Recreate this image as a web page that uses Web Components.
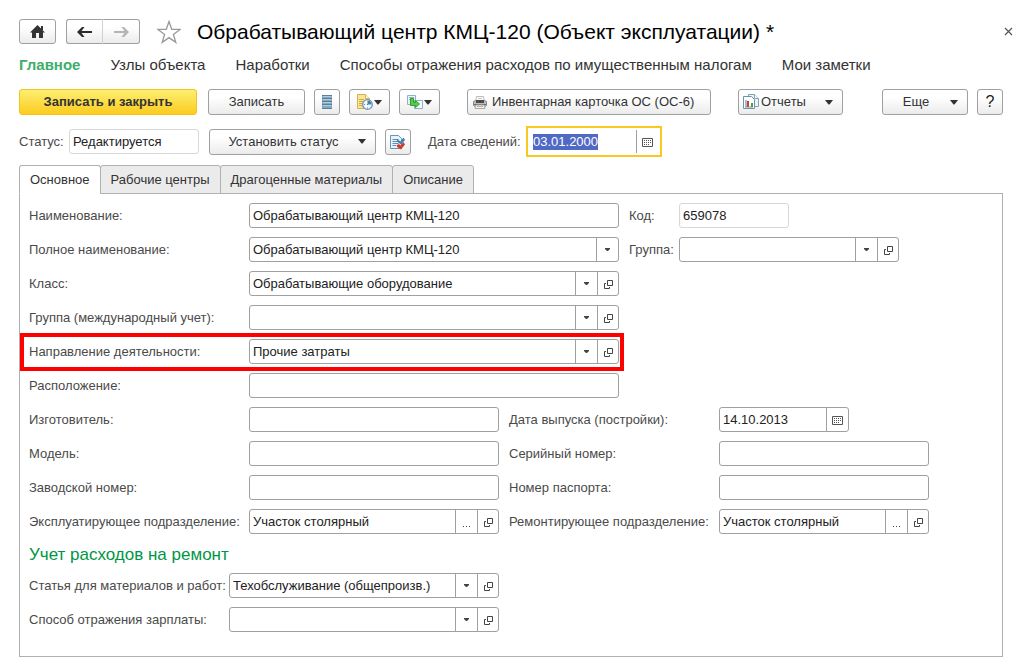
<!DOCTYPE html>
<html lang="ru">
<head>
<meta charset="utf-8">
<meta name="viewport" content="width=device-width, initial-scale=1">
<title>Обрабатывающий центр КМЦ-120 (Объект эксплуатации)</title>
<style>
  body { margin: 0; background: #fff; color: #333; font: 13px/16px "Liberation Sans", Arial, sans-serif; }
</style>
</head>
<body>
<object-card></object-card>

<template id="card-template">
  <style>
    :host { display: block; padding: 19px 26px 14px 19px; }
    header { display: flex; align-items: center; height: 25px; margin-right: -10px; }
    h1 { flex: 1; margin: 0 0 0 16px; font-size: 21px; line-height: 24px; font-weight: 400; color: #000; white-space: nowrap; }
    .home { --w: 37px; --h: 25px; }
    .pair { display: flex; margin-left: 10px; --w: 37px; --h: 25px; }
    .star, .close { display: flex; padding: 0; border: 0; background: none; }
    .star { margin-left: 17px; }
    nav { display: flex; gap: 30px; margin-top: 12px; font-size: 15px; line-height: 18px; white-space: nowrap; }
    nav a { color: #333; text-decoration: none; }
    nav a.on { color: #3dae6c; font-weight: 700; }
    .bar { display: flex; align-items: center; gap: 9px; margin-top: 15px; }
    .status { display: flex; align-items: center; height: 31px; margin-top: 11px; }
    .w26 { --w: 26px; }
    .w41 { --w: 41px; }
    .save { --w: 178px; margin-right: 2px; }
    .write { --w: 97px; }
    .print { --w: 244px; margin: 0 18px; }
    .reports { --w: 105px; }
    .more { --w: 86px; margin-left: auto; }
    .state { --label: 50px; --field: 130px; margin-right: 10px; }
    .set { --w: 167px; margin-right: 9px; }
    .when { --label: 98px; --field: 136px; margin-left: 17px; }
    card-tabs { margin-top: 8px; }
    .form { display: flex; flex-direction: column; gap: 9px; padding: 9px 9px 24px; }
    .row { display: flex; gap: 10px; position: relative; }
    .row > * { --label: 220px; --field: 370px; }
    .row > .side { --label: 50px; --field: 220px; }
    .row > .code { --field: 110px; }
    .row.half > * { --field: 250px; }
    .row.half > .second { --label: 210px; --field: 210px; }
    .row.half > .date { --field: 130px; }
    .row.cost > * { --label: 200px; --field: 270px; }
    .mark { align-self: flex-start; }
    .mark::after { content: ""; position: absolute; inset: -6px -5px -7px -9px; border: 4px solid #f00; pointer-events: none; }
    h2 { margin: 3px 0 0; font-size: 17px; line-height: 18px; font-weight: 400; color: #009646; }
  </style>
  <header>
    <card-button class="home" icon="home" hint="Домой"></card-button>
    <div class="pair">
      <card-button icon="back" hint="Назад" join="left"></card-button>
      <card-button icon="forward" hint="Вперед" join="right"></card-button>
    </div>
    <button class="star" aria-label="В избранное"><card-icon name="star"></card-icon></button>
    <h1>Обрабатывающий центр КМЦ-120 (Объект эксплуатации) *</h1>
    <button class="close" aria-label="Закрыть"><card-icon name="close"></card-icon></button>
  </header>
  <nav>
    <a class="on" href="#main">Главное</a>
    <a href="#nodes">Узлы объекта</a>
    <a href="#hours">Наработки</a>
    <a href="#taxes">Способы отражения расходов по имущественным налогам</a>
    <a href="#notes">Мои заметки</a>
  </nav>
  <div class="bar">
    <card-button class="save" primary>Записать и закрыть</card-button>
    <card-button class="write">Записать</card-button>
    <card-button class="w26" icon="list" hint="Список"></card-button>
    <card-button class="w41" icon="task" hint="Напоминание" caret tight></card-button>
    <card-button class="w41" icon="based" hint="Создать на основании" caret tight></card-button>
    <card-button class="print" icon="printer" start>Инвентарная карточка ОС (ОС-6)</card-button>
    <card-button class="reports" icon="report" caret start tight>Отчеты</card-button>
    <card-button class="more" caret>Еще</card-button>
    <card-button class="w26" hint="Справка" big>?</card-button>
  </div>
  <div class="status">
    <card-field class="state" label="Статус:" value="Редактируется" readonly></card-field>
    <card-button class="set" caret>Установить статус</card-button>
    <card-button class="w26" icon="check" hint="Проверить"></card-button>
    <card-field class="when" label="Дата сведений:" value="03.01.2000" tools="calendar" active></card-field>
  </div>
  <card-tabs tabs="Основное|Рабочие центры|Драгоценные материалы|Описание">
    <div class="form">
      <div class="row">
        <card-field label="Наименование:" value="Обрабатывающий центр КМЦ-120"></card-field>
        <card-field class="side code" label="Код:" value="659078" readonly></card-field>
      </div>
      <div class="row">
        <card-field label="Полное наименование:" value="Обрабатывающий центр КМЦ-120" tools="drop"></card-field>
        <card-field class="side" label="Группа:" tools="drop open"></card-field>
      </div>
      <div class="row"><card-field label="Класс:" value="Обрабатывающие оборудование" tools="drop open"></card-field></div>
      <div class="row"><card-field label="Группа (международный учет):" tools="drop open"></card-field></div>
      <div class="row mark"><card-field label="Направление деятельности:" value="Прочие затраты" tools="drop open"></card-field></div>
      <div class="row"><card-field label="Расположение:"></card-field></div>
      <div class="row half">
        <card-field label="Изготовитель:"></card-field>
        <card-field class="second date" label="Дата выпуска (постройки):" value="14.10.2013" tools="calendar"></card-field>
      </div>
      <div class="row half">
        <card-field label="Модель:"></card-field>
        <card-field class="second" label="Серийный номер:"></card-field>
      </div>
      <div class="row half">
        <card-field label="Заводской номер:"></card-field>
        <card-field class="second" label="Номер паспорта:"></card-field>
      </div>
      <div class="row half">
        <card-field label="Эксплуатирующее подразделение:" value="Участок столярный" tools="dots open"></card-field>
        <card-field class="second" label="Ремонтирующее подразделение:" value="Участок столярный" tools="dots open"></card-field>
      </div>
      <h2>Учет расходов на ремонт</h2>
      <div class="row cost"><card-field label="Статья для материалов и работ:" value="Техобслуживание (общепроизв.)" tools="drop open"></card-field></div>
      <div class="row cost"><card-field label="Способ отражения зарплаты:" tools="drop open"></card-field></div>
    </div>
  </card-tabs>
</template>

<script>
const ICONS = {
  home: [15, 13, '<path d="M7.5 0 15 7.500h-2V13H9V8H6v5H2V7.500H0Z" fill="#333"/><path d="M11 1h2v4h-2z" fill="#333"/>'],
  back: [15, 12, '<path d="M0 6 5 1h2.500L4.500 5H15v2H4.500l3 4H5Z" fill="#2b2b2b"/>'],
  forward: [15, 12, '<path d="M15 6l-5-5H7.500l3 4H0v2h10.500l-3 4H10Z" fill="#b4b4b4"/>'],
  star: [24, 24, '<path d="M12 1.5 14.7 9.3 23 9.4 16.4 14.4 18.8 22.3 12 17.6 5.2 22.3 7.6 14.4 1 9.4 9.3 9.3Z" fill="#fff" stroke="#999" stroke-width="1.3"/>'],
  close: [9, 9, '<path d="m1 1 7 7M8 1 1 8" stroke="#555" stroke-width="1.2"/>'],
  caret: [9, 5, '<path d="M1 0h8L5.500 4.500h-1Z" fill="#333"/>'],
  drop: [5, 3, '<path d="M0 0h5v1L3 3H2L0 1Z" fill="#444"/>'],
  open: [9, 9, '<path d="M3.5.5h5v5h-5zM2 3.5H.5v5h5V7" fill="none" stroke="#444"/>'],
  dots: [8, 2, '<path d="M0 1h1v1H0zM3 1h1v1H3zM6 1h1v1H6z" fill="#444"/>'],
  calendar: [11, 9, '<path d="M.5.5h10v8H.5z" fill="#fff" stroke="#555"/><path d="M2 2.5h7M2 4.5h7M2 6.5h5" stroke="#555" stroke-dasharray="1 1"/>'],
  list: [10, 14, '<path d="M0 0h10v14H0z" fill="#86a9c1"/><path d="M0 .5h10M0 3.500h10M0 6.500h10M0 9.500h10M0 13.500h10" stroke="#56809c"/><path d="M1 1.500h8M1 4.500h8M1 7.500h8M1 10.500h8" stroke="#b3ccdc"/>'],
  task: [16, 16, '<path d="M.5.5h8l4 4v10H.5z" fill="#fbe596" stroke="#d3b054"/><path d="M8.500.5v4h4" fill="#fff8dc" stroke="#d3b054"/><path d="M2 5.500h5M2 7.500h6M2 9.500h4M2 11.500h3" stroke="#d0a84a"/><circle cx="10.500" cy="10.500" r="4.800" fill="#f3f9fd" stroke="#6b97ba" stroke-width="1.300"/><path d="M10.500 10.500V6.500a4 4 0 0 1 4 4Z" fill="#4383b4"/><path d="M10.500 13.500v1M7 10.500h1" stroke="#5d88ad"/><path d="M10 10h1v1h-1z" fill="#c64a3a"/>'],
  based: [16, 15, '<path d="M.5.5h8v9h-8z" fill="#edf5f9" stroke="#8fb0c2"/><path d="M2 2.500h5M2 4.500h1" stroke="#8fb0c2"/><path d="M7.500 5.500h8v8h-8z" fill="#f6fbfd" stroke="#8fb0c2"/><path d="M3.500 3.500h3v4h2v-2l4 3.500-4 3.500v-2h-5Z" fill="#5acb48" stroke="#2ba02f"/>'],
  printer: [14, 14, '<path d="M3.500 1.500h7l1 5h-9z" fill="#fafafa" stroke="#bbb"/><path d="M5 3.500h4" stroke="#ccc"/><path d="M.5 6.500l2-1h9l2 1v4l-1 1h-11l-1-1z" fill="#bcbcbc" stroke="#888"/><path d="M3 5h8v3H3z" fill="#4a4a4a"/><path d="M1 9.500h12" stroke="#666"/><path d="M3 10h8l1 3.500H2z" fill="#f6f2ee" stroke="#aaa"/><path d="M4 11.500h6" stroke="#dca884"/>'],
  report: [16, 16, '<path d="M5.500.5h6l4 4v8h-10z" fill="#e9f3f8" stroke="#7fa5b8"/><path d="M11.500.5v4h4" fill="#fff" stroke="#7fa5b8"/><path d="M.5 2.500h8l3 3v9H.5z" fill="#fff" stroke="#6c95ab"/><path d="M2 6h2v7H2z" fill="#9cc0d4"/><path d="M4 7h2v6H4z" fill="#d93b2b"/><path d="M8 9h2v4H8z" fill="#3ba545"/><path d="M2 13h8" stroke="#888"/>'],
  check: [16, 16, '<path d="M.5 1.500h8l3 3v10H.5z" fill="#e9f2f9" stroke="#6a95b4"/><path d="M2.500 5.500h6M2.500 7.500h5M2.500 9.500h6M2.500 11.500h4" stroke="#5f8eb0"/><path d="m7 5 2 1.500 1.500 1 3-4L15 6l-4 4.500L7 7.500Z" fill="#3b80b4"/><path d="m7 11 2-1 1.500 1.500 3-3.500 1.500 2.500-4 5L7 13Z" fill="#d23c2d"/>'],
};

const icon = name => `<card-icon name="${name}"></card-icon>`;

class CardIcon extends HTMLElement {
  connectedCallback() {
    if (this.shadowRoot) return;
    const [w, h, body] = ICONS[this.getAttribute('name')];
    this.attachShadow({ mode: 'open' }).innerHTML = `
      <style>:host { display: block; flex: none; } svg { display: block; }</style>
      <svg width="${w}" height="${h}" viewBox="0 0 ${w} ${h}" aria-hidden="true">${body}</svg>`;
  }
}

class CardButton extends HTMLElement {
  connectedCallback() {
    if (this.shadowRoot) return;
    const name = this.getAttribute('icon');
    const hint = this.getAttribute('hint');
    const text = this.textContent.trim();
    this.attachShadow({ mode: 'open' }).innerHTML = `
      <style>
        :host { display: block; flex: 0 0 var(--w); }
        button { display: flex; align-items: center; justify-content: center; box-sizing: border-box; width: 100%;
          height: var(--h, 26px); padding: 0; border: 1px solid #a0a0a0; border-radius: 3px; font: inherit; color: #333;
          background: linear-gradient(#fff 30%, #ebebeb); white-space: nowrap; }
        span { flex: 1; text-align: center; }
        .caret { padding-right: 9px; }
        :host([start]) button { padding-left: 5px; gap: 5px; }
        :host([start][tight]) button { padding-left: 4px; gap: 2px; }
        :host([start]) span { text-align: left; }
        :host([big]) span { font-size: 16px; color: #222; }
        :host([primary]) button { border-color: #f5c320; background: linear-gradient(#fdef70, #fbcb20); font-weight: 700; }
        :host([join="left"]) button { border-radius: 3px 0 0 3px; border-right-color: #d0d0d0; }
        :host([join="right"]) button { border-radius: 0 3px 3px 0; border-left: 0; }
      </style>
      <button type="button"${hint ? ` aria-label="${hint}"` : ''}>
        ${name ? icon(name) : ''}${text ? '<span><slot></slot></span>' : ''}
        ${this.hasAttribute('caret') ? icon('caret') : ''}
      </button>`;
    if (this.hasAttribute('caret') && text) this.shadowRoot.querySelector('button').classList.add('caret');
  }
}

const TOOL_HINTS = { drop: 'Выбрать из списка', open: 'Открыть', dots: 'Выбрать', calendar: 'Календарь' };

class CardField extends HTMLElement {
  connectedCallback() {
    if (this.shadowRoot) return;
    const tools = (this.getAttribute('tools') || '').split(' ').filter(Boolean);
    this.attachShadow({ mode: 'open' }).innerHTML = `
      <style>
        :host { display: flex; align-items: center; }
        label { flex: 0 0 var(--label); color: #4a4a4a; white-space: nowrap; }
        .box { display: flex; box-sizing: border-box; width: var(--field); height: 25px; border: 1px solid #a0a0a0;
          border-radius: 3px; background: #fff; overflow: hidden; }
        input { flex: 1; min-width: 0; padding: 0 3px; border: 0; outline: 0; background: none; font: inherit; color: #222; }
        input::selection { background: #5069c4; color: #fff; }
        button { display: flex; align-items: center; justify-content: center; box-sizing: border-box; width: 22px;
          padding: 0; border: 0; border-left: 1px solid #a0a0a0; background: none; }
        button.open, button.calendar { padding-top: 2px; }
        button.open { width: 21px; }
        button.dots { padding-top: 8px; }
        :host([readonly]) .box { border-color: #d8d8d8; }
        :host([active]) .box { height: 31px; padding: 2px; border: 2px solid #f9c922; border-radius: 0; }
      </style>
      <label for="value">${this.getAttribute('label')}</label>
      <div class="box">
        <input id="value" type="text"${this.hasAttribute('readonly') ? ' readonly' : ''}>
        ${tools.map(t => `<button type="button" class="${t}" aria-label="${TOOL_HINTS[t]}">${icon(t)}</button>`).join('')}
      </div>`;
    const input = this.shadowRoot.querySelector('input');
    input.value = this.getAttribute('value') || '';
    if (this.hasAttribute('active')) {
      input.focus();
      input.select();
    }
  }
}

class CardTabs extends HTMLElement {
  connectedCallback() {
    if (this.shadowRoot) return;
    const tabs = this.getAttribute('tabs').split('|');
    this.attachShadow({ mode: 'open' }).innerHTML = `
      <style>
        :host { display: block; }
        .tabs { display: flex; position: relative; height: 29px; margin-bottom: -1px; }
        button { padding: 0 10px; border: 1px solid #b0b0b0; border-radius: 3px 3px 0 0; background: #ebebeb;
          font: inherit; color: #333; white-space: nowrap; }
        button + button { margin-left: -1px; }
        button[aria-selected="true"] { background: #fff; border-bottom-color: #fff; }
        .panel { border: 1px solid #b0b0b0; }
      </style>
      <div class="tabs" role="tablist">
        ${tabs.map((t, i) => `<button type="button" role="tab" aria-selected="${i === 0}">${t}</button>`).join('')}
      </div>
      <div class="panel" role="tabpanel"><slot></slot></div>`;
  }
}

class ObjectCard extends HTMLElement {
  connectedCallback() {
    if (this.shadowRoot) return;
    const root = this.attachShadow({ mode: 'open' });
    root.append(document.getElementById('card-template').content.cloneNode(true));
  }
}

customElements.define('card-icon', CardIcon);
customElements.define('card-button', CardButton);
customElements.define('card-field', CardField);
customElements.define('card-tabs', CardTabs);
customElements.define('object-card', ObjectCard);
</script>
</body>
</html>
